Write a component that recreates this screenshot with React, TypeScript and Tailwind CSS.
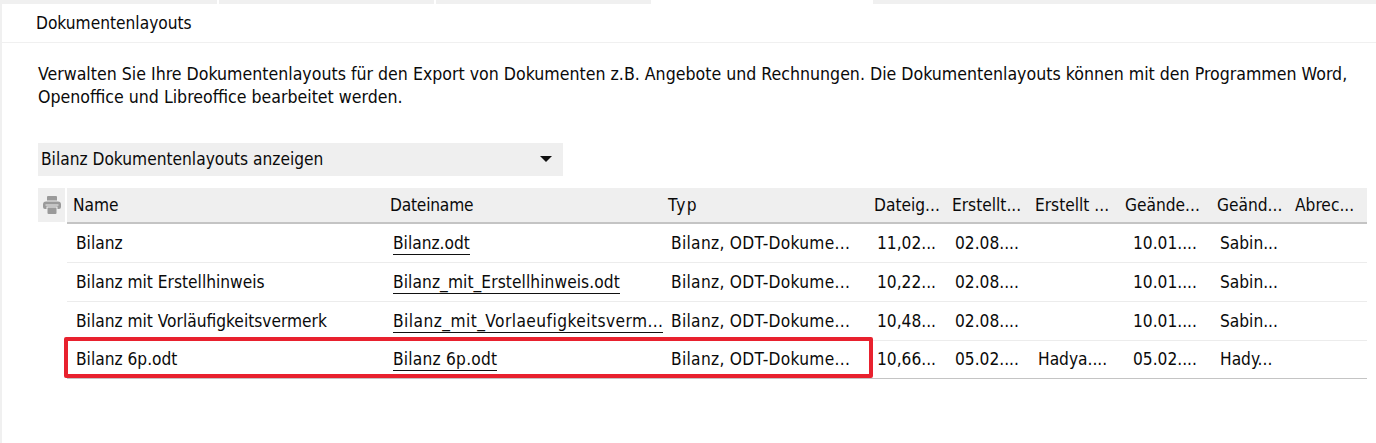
const cols = ["w-[317px]", "w-[278px]", "w-[206px]", "w-[78px]", "w-[83px]", "w-[90px]", "w-[92px]", "w-[78px]", "w-[75px]"];
const heads = ["Name", "Dateiname", "Typ", "Dateig...", "Erstellt...", "Erstellt ...", "Geände...", "Geänd...", "Abrec..."];
const rows = [
  ["Bilanz", "Bilanz.odt", "Bilanz, ODT-Dokume...", "11,02...", "02.08....", "", "10.01....", "Sabin..."],
  ["Bilanz mit Erstellhinweis", "Bilanz_mit_Erstellhinweis.odt", "Bilanz, ODT-Dokume...", "10,22...", "02.08....", "", "10.01....", "Sabin..."],
  ["Bilanz mit Vorläufigkeitsvermerk", "Bilanz_mit_Vorlaeufigkeitsverm...", "Bilanz, ODT-Dokume...", "10,48...", "02.08....", "", "10.01....", "Sabin..."],
  ["Bilanz 6p.odt", "Bilanz 6p.odt", "Bilanz, ODT-Dokume...", "10,66...", "05.02....", "Hadya....", "05.02....", "Hady..."],
];
const fileTracking = ["", "tracking-[0.08px]", "tracking-[0.44px]", "tracking-[0.22px]"];
const headTracking = ["", "tracking-[-0.2px]", "tracking-[1.4px]", "", "", "", "", "", ""];

function PrinterIcon() {
  return (
    <svg width="18" height="18" viewBox="0 0 18 18" fill="#9a9a9a">
      <path d="M5 0h8a1 1 0 0 1 1 1v3.500H4V1a1 1 0 0 1 1-1z" />
      <path d="M3 5.500h12a3 3 0 0 1 3 3V11a2 2 0 0 1-2 2h-1.500v-2.500h-11V13H2a2 2 0 0 1-2-2V8.500a3 3 0 0 1 3-3z" />
      <path d="M4.500 11.500h9V17a1 1 0 0 1-1 1h-7a1 1 0 0 1-1-1z" />
      <path d="M2.500 9h13" stroke="#efefef" strokeWidth="1" />
    </svg>
  );
}

export default function App() {
  return (
    <div className="relative w-[1376px] h-[443px] overflow-hidden bg-white text-[17.2px] text-[#0a0a0a] font-['DejaVu_Sans_Condensed','DejaVu_Sans',sans-serif]">
      <div className="flex h-[4px] gap-[2px]">
        <div className="w-[217px] bg-[#f0f0f0]" />
        <div className="w-[215px] bg-[#f0f0f0]" />
        <div className="w-[215px] bg-[#f0f0f0]" />
        <div className="w-[217px] ml-[1px] bg-white" />
        <div className="flex-1 bg-[#f0f0f0]" />
      </div>
      <div className="h-[439px] border-l-2 border-[#f0f0f0]">
        <div className="h-[39px] border-b border-[#f0f0f0] pl-[34px] pt-[9px] leading-[20px]">Dokumentenlayouts</div>
        <p className="mt-[20px] ml-[36px] w-[1325px] leading-[23px] text-[17.6px]">
          Verwalten Sie Ihre Dokumentenlayouts für den Export von Dokumenten z.B. Angebote und Rechnungen. Die Dokumentenlayouts können mit den Programmen Word, Openoffice und Libreoffice bearbeitet werden.
        </p>
        <div className="mt-[34px] ml-[36px] flex h-[33px] w-[525px] items-center justify-between bg-[#efefef] pl-[3px] pr-[11px]">
          <span className="pt-[1px]">Bilanz Dokumentenlayouts anzeigen</span>
          <svg width="12" height="6" viewBox="0 0 12 6" fill="#111" className="mb-[2px]"><path d="M0 0h12L6 6z" /></svg>
        </div>
        <div className="mt-[12px] ml-[36px] flex">
          <div className="flex h-[34px] w-[27px] items-start justify-center bg-[#efefef] pt-[8px]">
            <PrinterIcon />
          </div>
          <div className="ml-[2px] w-[1300px]">
            <div className="flex h-[36px] items-center border-b-2 border-[#c4c4c4] bg-[#efefef] pt-[2px] pl-[3px]">
              {heads.map((h, i) => (
                <div key={h} className={`${cols[i]} pl-[3px] whitespace-nowrap ${headTracking[i]}`}>{h}</div>
              ))}
            </div>
            {rows.map((r, ri) => (
              <div key={ri} className={`flex items-center pl-[3px] pt-[1px] whitespace-nowrap border-b ${ri === 3 ? "h-[38px] border-[#c4c4c4]" : "h-[39px] border-[#ececec]"}`}>
                {r.map((c, i) => (
                  <div key={i} className={`${cols[i]} ${i === 6 ? "pl-[11px]" : "pl-[6px]"} ${i === 2 ? "tracking-[0.3px]" : ""}`}>
                    {i === 1 ? <span className={`border-b border-[#111] pb-[1px] ${fileTracking[ri]}`}>{c}</span> : c}
                  </div>
                ))}
              </div>
            ))}
          </div>
        </div>
      </div>
      <div className="absolute left-[64px] top-[337px] h-[41px] w-[809px] rounded-[2px] border-4 border-[#e8212e]" />
    </div>
  );
}
